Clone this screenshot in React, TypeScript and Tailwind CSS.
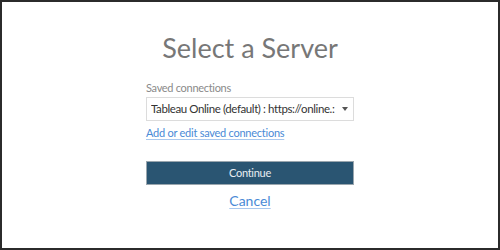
export default function App() {
  return (
    <div className="w-[500px] h-[250px] border-2 border-[#2b2b2b] bg-white flex flex-col items-center font-['Lato',sans-serif]">
      <h1 className="mt-[29px] text-[#777] text-[27px] leading-[34px] font-normal">Select a Server</h1>

      <div className="w-[208px] mt-[16px] flex flex-col">
        <label className="text-[11px] leading-[14px] tracking-[-0.3px] text-[#8a8a8a]">Saved connections</label>
        <div className="mt-[2px] h-[24px] border border-[#dcdcdc] flex items-center pl-[4px] pr-[5px]">
          <span className="flex-1 text-[11.5px] tracking-[-0.4px] text-[#333] whitespace-nowrap overflow-hidden">Tableau Online (default) : https://online.:</span>
          <svg width="6" height="4" viewBox="0 0 6 4" className="ml-[4px] shrink-0">
            <path d="M0 0h6L3 4z" fill="#555" />
          </svg>
        </div>
        <a className="mt-[5px] self-start text-[11px] leading-[14px] tracking-[-0.25px] text-[#4a8ad6] underline decoration-[#a9c8ee] underline-offset-2 cursor-pointer">
          Add or edit saved connections
        </a>

        <button className="mt-[21px] h-[24px] w-full bg-[#2a5572] border border-[#9aa6ae] text-[#e8eef2] text-[11px] tracking-[-0.3px]">
          Continue
        </button>

        <a className="mt-[7px] self-center text-[14px] leading-[18px] text-[#4a8ad6] underline decoration-[#a9c8ee] underline-offset-2 cursor-pointer">
          Cancel
        </a>
      </div>
    </div>
  );
}
